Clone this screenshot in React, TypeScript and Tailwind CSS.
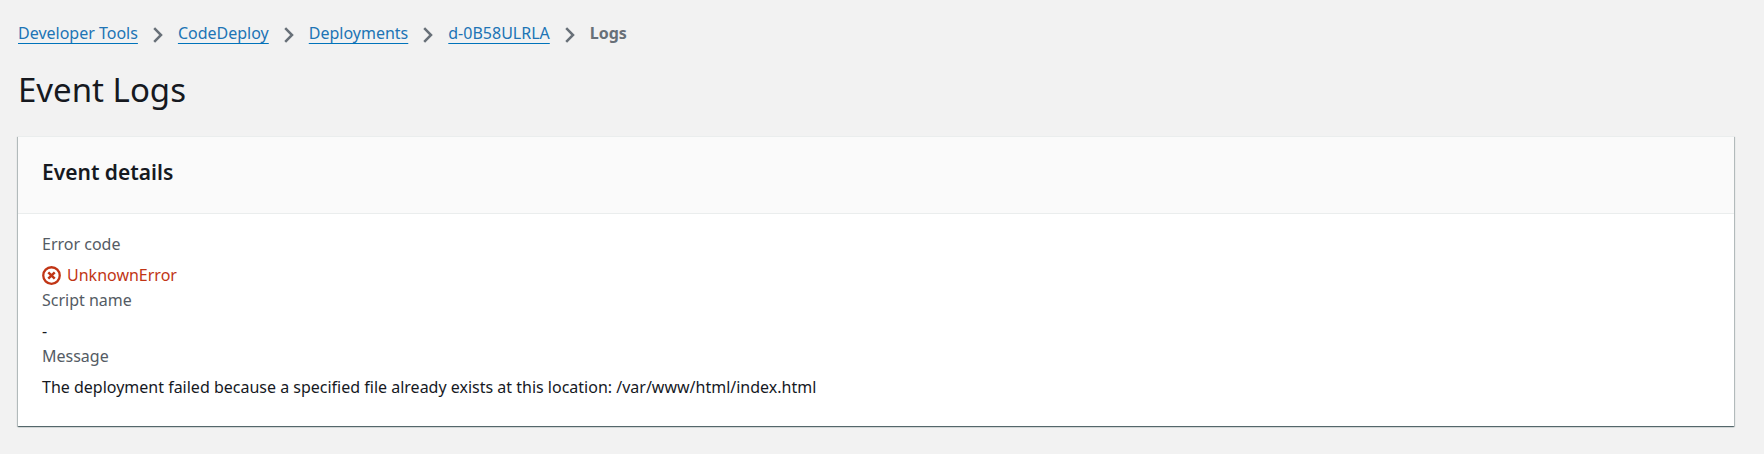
import React from "react";

const trail = ["Developer Tools", "CodeDeploy", "Deployments", "d-0B58ULRLA"];

function Chevron() {
  return (
    <svg width="10" height="16" viewBox="0 0 10 16" fill="none" className="mt-0.5 shrink-0" aria-hidden="true">
      <path d="M1.2 1.2 8 8l-6.8 6.8" stroke="#687078" strokeWidth="2.5" />
    </svg>
  );
}

function ErrorIcon() {
  return (
    <svg width="19" height="19" viewBox="0 0 20 20" fill="none" stroke="#c13515" className="shrink-0" aria-hidden="true">
      <circle cx="10" cy="10" r="8.7" strokeWidth="2.4" />
      <path d="m6.6 6.6 6.8 6.8M13.4 6.6l-6.8 6.8" strokeWidth="2.6" />
    </svg>
  );
}

export default function App() {
  return (
    <main className="min-h-screen bg-[#f2f2f2] pt-[21px] pr-[30px] pb-7 pl-[18px] font-['Noto_Sans',sans-serif] text-base leading-[25px] text-[#16191f]">
      <nav aria-label="Breadcrumb">
        <ol className="flex flex-wrap items-center">
          {trail.map((name) => (
            <li key={name} className="flex items-center gap-[15px] pr-[15px]">
              <a href="#" className="text-[#2074b5] underline decoration-[#0073bb] decoration-1 underline-offset-4">
                {name}
              </a>
              <Chevron />
            </li>
          ))}
          <li aria-current="page" className="font-bold text-[#687078]">
            Logs
          </li>
        </ol>
      </nav>

      <h1 className="mt-[22px] text-[33px] leading-11">Event Logs</h1>

      <section className="mt-6 border-t border-[#eaeded] bg-white shadow-[0_1px_1px_0_rgba(0,28,36,0.45),1px_1px_1px_0_rgba(0,28,36,0.2),-1px_1px_1px_0_rgba(0,28,36,0.2)]">
        <header className="border-b border-[#eaeded] bg-[#fafafa] px-6 pt-5 pb-[26px]">
          <h2 className="text-[21px] leading-[30px] font-semibold">Event details</h2>
        </header>
        <dl className="px-6 pt-[18px] pb-[26px]">
          <dt className="text-[#545b64]">Error code</dt>
          <dd className="mt-[6px] flex items-center gap-[6px] text-[#c13515]">
            <ErrorIcon />
            UnknownError
          </dd>
          <dt className="text-[#545b64]">Script name</dt>
          <dd className="mt-[6px]">-</dd>
          <dt className="text-[#545b64]">Message</dt>
          <dd className="mt-[6px]">
            The deployment failed because a specified file already exists at this location: /var/www/html/index.html
          </dd>
        </dl>
      </section>
    </main>
  );
}
